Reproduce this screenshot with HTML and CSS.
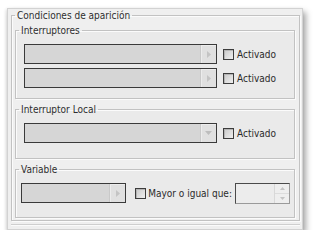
FILE: index.html
```html
<!DOCTYPE html>
<html>
<head>
    <meta charset="UTF-8">
    <title>Condiciones de aparición</title>
    <link rel="stylesheet" href="styles.css">
</head>
<body>
    <div class="window">
        <fieldset class="group group-main">
            <legend>Condiciones de aparición</legend>

            <fieldset class="group group-sub group-switches">
                <legend>Interruptores</legend>
                <div class="row">
                    <div class="combo">
                        <span class="combo-btn">
                            <svg width="4" height="7" viewBox="0 0 4 7"><path d="M0 0 L4 3.5 L0 7 Z" fill="#c4c4c4"/></svg>
                        </span>
                    </div>
                    <label class="check"><span class="box"></span>Activado</label>
                </div>
                <div class="row">
                    <div class="combo">
                        <span class="combo-btn">
                            <svg width="4" height="7" viewBox="0 0 4 7"><path d="M0 0 L4 3.5 L0 7 Z" fill="#c4c4c4"/></svg>
                        </span>
                    </div>
                    <label class="check"><span class="box"></span>Activado</label>
                </div>
            </fieldset>

            <fieldset class="group group-sub group-local">
                <legend>Interruptor Local</legend>
                <div class="row">
                    <div class="combo">
                        <span class="combo-btn">
                            <svg width="7" height="4" viewBox="0 0 7 4"><path d="M0 0 L7 0 L3.5 4 Z" fill="#bdbdbd"/></svg>
                        </span>
                    </div>
                    <label class="check"><span class="box"></span>Activado</label>
                </div>
            </fieldset>

            <fieldset class="group group-sub group-var">
                <legend>Variable</legend>
                <div class="row row-var">
                    <div class="combo combo-short">
                        <span class="combo-btn">
                            <svg width="4" height="7" viewBox="0 0 4 7"><path d="M0 0 L4 3.5 L0 7 Z" fill="#c4c4c4"/></svg>
                        </span>
                    </div>
                    <label class="check check-var"><span class="box"></span>Mayor o igual que:</label>
                    <div class="spin">
                        <span class="spin-btns">
                            <span class="spin-btn">
                                <svg width="5" height="3" viewBox="0 0 5 3"><path d="M0 3 L5 3 L2.5 0 Z" fill="#c4c4c4"/></svg>
                            </span>
                            <span class="spin-btn">
                                <svg width="5" height="3" viewBox="0 0 5 3"><path d="M0 0 L5 0 L2.5 3 Z" fill="#c4c4c4"/></svg>
                            </span>
                        </span>
                    </div>
                </div>
            </fieldset>
        </fieldset>
        <div class="next-edge"></div>
    </div>
</body>
</html>
```

FILE: styles.css
```css
body {
    margin: 0;
    padding: 8px 0 0 7px;
    background-color: #fff;
    font-family: "DejaVu Sans Condensed", "DejaVu Sans", sans-serif;
    font-size: 10px;
    color: #2a2a2a;
}

.window {
    width: 296px;
    height: 222px;
    box-sizing: border-box;
    padding: 0 2px 0 3px;
    background-color: #efefef;
    border: 1px solid #d2d2d2;
    box-shadow: 3px 4px 6px rgba(0, 0, 0, 0.35), -1px 1px 3px rgba(0, 0, 0, 0.12);
    overflow: hidden;
}

/* group boxes (etched look) */
.group {
    margin: 0;
    min-width: 0;
    border: 1px solid #c2c2c2;
    box-shadow: inset 1px 1px 0 #fbfbfb, 1px 1px 0 #fbfbfb;
}
.group legend {
    padding: 0 2px;
    line-height: 13px;
    color: #2e2e2e;
}

.group-main {
    padding: 2px 4px 2px 3px;
}

.group-sub {
    padding: 7px 4px 10px 3px;
    background-color: #eaeaea;
}
.group-local {
    margin-top: 4px;
    padding-bottom: 15px;
}
.group-var {
    margin-top: 4px;
    padding-bottom: 14px;
}

/* top edge of the next group, cut off by the screenshot */
.next-edge {
    margin-top: 3px;
    border-top: 1px solid #cfcfcf;
    box-shadow: inset 0 1px 0 #fbfbfb;
    height: 4px;
}

.row {
    display: flex;
    align-items: center;
    height: 20px;
    padding-left: 5px;
}
.row + .row {
    margin-top: 4px;
}
.row-var {
    padding-left: 2px;
}

/* disabled combo box */
.combo {
    display: flex;
    justify-content: flex-end;
    width: 193px;
    height: 20px;
    box-sizing: border-box;
    border: 1px solid #3a3a3a;
    background-color: #d6d6d6;
}
.combo-short {
    width: 107px;
}
.combo-btn {
    display: flex;
    align-items: center;
    justify-content: center;
    width: 15px;
    border-left: 1px solid #c9c9c9;
    background-color: #e0e0e0;
    box-shadow: inset 1px 1px 0 #ececec;
}

/* check box */
.check {
    display: flex;
    align-items: center;
    margin-left: 6px;
    white-space: nowrap;
}
.check-var {
    margin-left: 9px;
}
.box {
    width: 11px;
    height: 11px;
    box-sizing: border-box;
    margin-right: 3px;
    border: 1px solid #3c3c3c;
    background: linear-gradient(135deg, #c9c9c9, #efefef);
    box-shadow: inset 1px 1px 0 #b4b4b4;
}
.check-var .box {
    margin-right: 2px;
}

/* spin box */
.spin {
    display: flex;
    justify-content: flex-end;
    width: 56px;
    height: 21px;
    box-sizing: border-box;
    margin-left: 3px;
    border: 1px solid #9a9a9a;
    border-top-color: #4a4a4a;
    border-left-color: #4a4a4a;
    background-color: #ececec;
}
.spin-btns {
    display: flex;
    flex-direction: column;
    width: 14px;
    border-left: 1px solid #d8d8d8;
}
.spin-btn {
    flex: 1;
    display: flex;
    align-items: center;
    justify-content: center;
    background-color: #eeeeee;
}
.spin-btn + .spin-btn {
    border-top: 1px solid #dcdcdc;
}
```
